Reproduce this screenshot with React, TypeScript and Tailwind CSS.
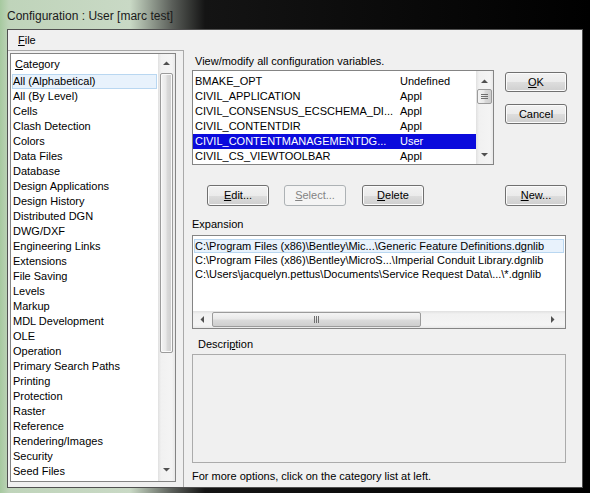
import React from "react";

const categories = [
  "All (Alphabetical)",
  "All (By Level)",
  "Cells",
  "Clash Detection",
  "Colors",
  "Data Files",
  "Database",
  "Design Applications",
  "Design History",
  "Distributed DGN",
  "DWG/DXF",
  "Engineering Links",
  "Extensions",
  "File Saving",
  "Levels",
  "Markup",
  "MDL Development",
  "OLE",
  "Operation",
  "Primary Search Paths",
  "Printing",
  "Protection",
  "Raster",
  "Reference",
  "Rendering/Images",
  "Security",
  "Seed Files",
];

const variables = [
  ["BMAKE_OPT", "Undefined"],
  ["CIVIL_APPLICATION", "Appl"],
  ["CIVIL_CONSENSUS_ECSCHEMA_DI...", "Appl"],
  ["CIVIL_CONTENTDIR", "Appl"],
  ["CIVIL_CONTENTMANAGEMENTDG...", "User"],
  ["CIVIL_CS_VIEWTOOLBAR", "Appl"],
];

function Arrow({ dir }: { dir: "up" | "down" | "left" | "right" }) {
  if (dir === "up" || dir === "down") {
    const pts = dir === "up" ? "0,4 3.5,0.5 7,4" : "0,0 3.5,3.5 7,0";
    return (
      <svg width="7" height="4" viewBox="0 0 7 4">
        <polygon points={pts} fill="#505050" />
      </svg>
    );
  }
  const pts = dir === "left" ? "4,0 0.5,3.5 4,7" : "0,0 3.5,3.5 0,7";
  return (
    <svg width="4" height="7" viewBox="0 0 4 7">
      <polygon points={pts} fill="#505050" />
    </svg>
  );
}

function Btn({
  children,
  className = "",
  disabled = false,
  h = "h-[21px]",
}: {
  children: React.ReactNode;
  className?: string;
  disabled?: boolean;
  h?: string;
}) {
  return (
    <div
      className={`${h} w-[62px] shrink-0 flex items-center justify-center rounded-[3px] border ${
        disabled
          ? "border-[#adb2b5] bg-[#f4f4f4] text-[#838383]"
          : "border-[#707070] bg-[linear-gradient(180deg,#f2f2f2_0%,#ebebeb_50%,#dddddd_51%,#cfcfcf_100%)] shadow-[inset_0_0_0_1px_#fbfbfb]"
      } ${className}`}
    >
      {children}
    </div>
  );
}

export default function App() {
  return (
    <div className="w-[590px] h-[493px] overflow-hidden flex flex-col bg-[linear-gradient(90deg,#a6c99f_0px,#bfd4ba_9px,#c9d9c5_130px,#5b5f5a_172px,#141414_205px,#000000_100%)] font-['Liberation_Sans',Arial,sans-serif] text-[11px] leading-none text-black">
      <div className="h-[29px] shrink-0 pl-[7px] pt-[2px] flex items-center text-[12px] text-[#1a1a1a]">
        Configuration : User [marc test]
      </div>

      <div className="mx-[7px] h-[459px] shrink-0 border border-[#505050] bg-[#f0f0f0] flex flex-col">
        {/* menu bar */}
        <div className="h-[20px] shrink-0 flex items-center pl-[10px]">
          <span>
            <u className="underline-offset-1">F</u>ile
          </span>
        </div>

        <div className="flex-1 flex min-h-0">
          {/* category panel */}
          <div className="w-[176px] shrink-0 border-t border-r border-[#a9a9a9] pt-[2px] pl-[2px]">
            <div className="w-[166px] h-[429px] border border-[#848484] bg-white flex">
              <div className="flex-1 flex flex-col">
                <div className="h-[20px] pt-[1px] flex items-center pl-[4px]">
                  <span>
                    <u className="underline-offset-1">C</u>ategory
                  </span>
                </div>
                {categories.map((c, i) => (
                  <div
                    key={c}
                    className={`h-[15px] mx-[1px] pl-[1px] flex items-center whitespace-nowrap ${
                      i === 0 ? "bg-[#e8f2fc] shadow-[inset_0_0_0_1px_#b9d7f1]" : ""
                    }`}
                  >
                    {c}
                  </div>
                ))}
              </div>
              <div className="w-[17px] flex flex-col bg-[linear-gradient(90deg,#e0e0e0_0%,#f1f1f1_18%,#f4f4f4_82%,#e8e8e8_100%)]">
                <div className="h-[17px] flex items-center justify-center">
                  <Arrow dir="up" />
                </div>
                <div className="flex-1 px-[2px] pt-[2px]">
                  <div className="h-[280px] rounded-[2px] border border-[#9b9b9b] bg-[linear-gradient(90deg,#f4f4f4_0%,#e9e9e9_45%,#dadada_55%,#cecece_100%)] shadow-[inset_0_0_0_1px_#fafafa]" />
                </div>
                <div className="h-[17px] mb-[3px] flex items-center justify-center">
                  <Arrow dir="down" />
                </div>
              </div>
            </div>
          </div>

          {/* right side */}
          <div className="flex-1 pl-[8px] flex flex-col">
            <div className="h-[15px] mt-[4px] pl-[3px] flex items-center">
              View/modify all configuration variables.
            </div>

            <div className="mt-[1px] flex">
              <div className="w-[302px] h-[95px] border border-[#848484] bg-white flex">
                <div className="flex-1 pt-[3px] flex flex-col">
                  {variables.map(([name, value], i) => (
                    <div
                      key={name}
                      className={`h-[15px] flex items-center whitespace-nowrap ${
                        i === 4 ? "bg-[#0b0bdc] text-white" : ""
                      }`}
                    >
                      <span className="w-[207px] pl-[2px] shrink-0">{name}</span>
                      <span>{value}</span>
                    </div>
                  ))}
                </div>
                <div className="w-[17px] flex flex-col bg-[linear-gradient(90deg,#e0e0e0_0%,#f1f1f1_18%,#f4f4f4_82%,#e8e8e8_100%)]">
                  <div className="h-[17px] pt-[2px] flex items-center justify-center">
                    <Arrow dir="up" />
                  </div>
                  <div className="flex-1 px-[1px] pt-[1px]">
                    <div className="h-[15px] rounded-[2px] border border-[#9b9b9b] bg-[linear-gradient(90deg,#f4f4f4_0%,#e9e9e9_45%,#dadada_55%,#cecece_100%)] flex items-center justify-center">
                      <svg width="7" height="6" viewBox="0 0 7 6">
                        <path d="M0 0.5h7M0 2.5h7M0 4.5h7" stroke="#6f6f6f" strokeWidth="1" />
                      </svg>
                    </div>
                  </div>
                  <div className="h-[17px] pb-[2px] flex items-center justify-center">
                    <Arrow dir="down" />
                  </div>
                </div>
              </div>

              <div className="ml-[11px] mt-[2px] flex flex-col gap-[12px]">
                <Btn h="h-[20px]">
                  <span>
                    <u className="underline-offset-1">O</u>K
                  </span>
                </Btn>
                <Btn h="h-[20px]">Cancel</Btn>
              </div>
            </div>

            {/* action buttons */}
            <div className="mt-[20px] flex">
              <Btn className="ml-[15px]">
                <span>
                  <u className="underline-offset-1">E</u>dit...
                </span>
              </Btn>
              <Btn className="ml-[15px]" disabled>
                <span>
                  <u className="underline-offset-1">S</u>elect...
                </span>
              </Btn>
              <Btn className="ml-[16px]">
                <span>
                  <u className="underline-offset-1">D</u>elete
                </span>
              </Btn>
              <Btn className="ml-[81px]">
                <span>
                  <u className="underline-offset-1">N</u>ew...
                </span>
              </Btn>
            </div>

            <div className="h-[15px] mt-[11px] flex items-center">Expansion</div>

            <div className="mt-[3px] w-[374px] h-[94px] border border-[#848484] bg-white flex flex-col">
              <div className="pt-[3px] flex flex-col">
                <div className="h-[14px] mx-[1px] pl-[1px] flex items-center whitespace-nowrap bg-[#e8f2fc] shadow-[inset_0_0_0_1px_#b9d7f1]">
                  C:\Program Files (x86)\Bentley\Mic...\Generic Feature Definitions.dgnlib
                </div>
                <div className="h-[14px] mx-[1px] pl-[1px] flex items-center whitespace-nowrap">
                  C:\Program Files (x86)\Bentley\MicroS...\Imperial Conduit Library.dgnlib
                </div>
                <div className="h-[14px] mx-[1px] pl-[1px] flex items-center whitespace-nowrap">
                  C:\Users\jacquelyn.pettus\Documents\Service Request Data\...\*.dgnlib
                </div>
              </div>
              <div className="flex-1" />
              <div className="h-[17px] flex bg-[linear-gradient(180deg,#e0e0e0_0%,#f1f1f1_18%,#f4f4f4_82%,#e8e8e8_100%)]">
                <div className="w-[17px] flex items-center justify-center">
                  <Arrow dir="left" />
                </div>
                <div className="flex-1 py-[1px] pl-[2px]">
                  <div className="w-[209px] h-full rounded-[2px] border border-[#9b9b9b] bg-[linear-gradient(180deg,#f4f4f4_0%,#e9e9e9_45%,#dadada_55%,#cecece_100%)] flex items-center justify-center">
                    <svg width="6" height="7" viewBox="0 0 6 7">
                      <path d="M0.5 0v7M2.5 0v7M4.5 0v7" stroke="#6f6f6f" strokeWidth="1" />
                    </svg>
                  </div>
                </div>
                <div className="w-[17px] mr-[4px] flex items-center justify-center">
                  <Arrow dir="right" />
                </div>
              </div>
            </div>

            <div className="h-[15px] mt-[8px] pl-[6px] flex items-center">
              <span>
                Descri<u className="underline-offset-1">p</u>tion
              </span>
            </div>
            <div className="mt-[2px] w-[374px] h-[109px] border border-[#ababab] bg-[#f0f0f0]" />

            <div className="h-[15px] mt-[6px] flex items-center">
              For more options, click on the category list at left.
            </div>
          </div>
        </div>
      </div>
    </div>
  );
}
